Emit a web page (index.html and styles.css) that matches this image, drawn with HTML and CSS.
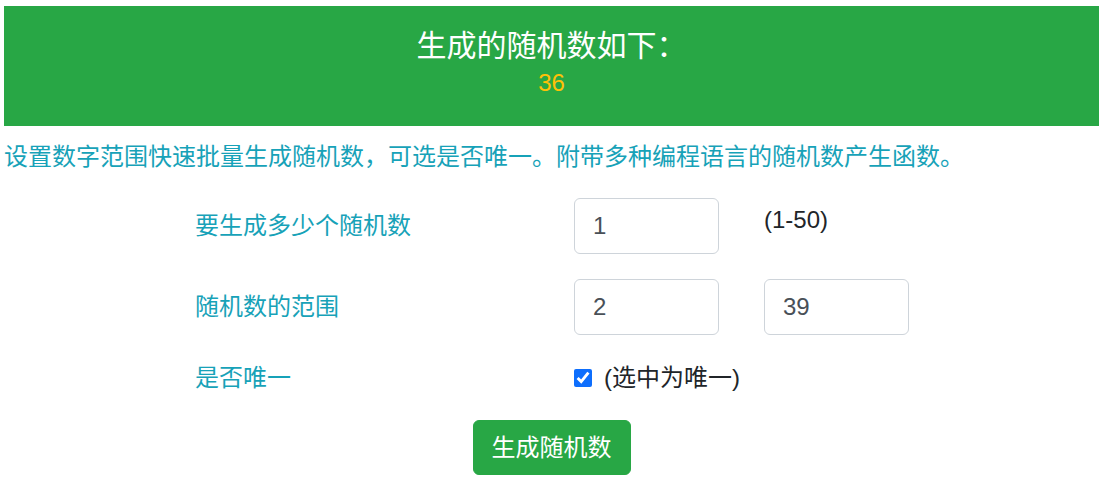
FILE: index.html
```html
<!DOCTYPE html>
<html lang="zh-CN">
<head>
<meta charset="utf-8">
<title>随机数生成器</title>
<link rel="stylesheet" href="styles.css">
</head>
<body>
<div class="result">
  <div class="result-title">生成的随机数如下：</div>
  <div class="result-value">36</div>
</div>
<p class="desc">设置数字范围快速批量生成随机数，可选是否唯一。附带多种编程语言的随机数产生函数。</p>
<form class="form">
  <label class="lbl">要生成多少个随机数</label>
  <div class="field"><input class="input" type="text" value="1"></div>
  <div class="hint">(1-50)</div>

  <label class="lbl">随机数的范围</label>
  <div class="field"><input class="input" type="text" value="2"></div>
  <div class="field"><input class="input" type="text" value="39"></div>

  <label class="lbl">是否唯一</label>
  <div class="check-wrap"><input class="check" type="checkbox" checked><span class="check-text">(选中为唯一)</span></div>
  <div></div>
</form>
<div class="actions"><button class="btn" type="button">生成随机数</button></div>
</body>
</html>
```

FILE: styles.css
```css
html, body {
  margin: 0;
  padding: 0;
  background: #fff;
}
body {
  padding: 6px 1px 0 4px;
  font-family: "Liberation Sans", "Noto Sans CJK SC", sans-serif;
  color: #212529;
}
.result {
  background: #28a745;
  height: 120px;
  box-sizing: border-box;
  padding-top: 20px;
  text-align: center;
}
.result-title {
  color: #fff;
  font-size: 30px;
  line-height: 40px;
}
.result-value {
  color: #ffc107;
  font-size: 24px;
  line-height: 34px;
}
.desc {
  margin: 13px 0 0 0;
  color: #17a2b8;
  font-size: 24px;
  line-height: 36px;
}
.form {
  display: grid;
  grid-template-columns: 379px 190px 145px;
  grid-template-rows: 56px 56px 36px;
  row-gap: 25px;
  margin: 23px 0 0 191px;
}
.lbl {
  color: #17a2b8;
  font-size: 24px;
  line-height: 36px;
  align-self: center;
}
.field {
  display: flex;
}
.input {
  box-sizing: border-box;
  width: 145px;
  height: 56px;
  padding: 9px 18px;
  border: 1px solid #ced4da;
  border-radius: 6px;
  font-family: "Liberation Sans", "Noto Sans CJK SC", sans-serif;
  font-size: 24px;
  color: #495057;
  background: #fff;
}
.hint {
  font-size: 24px;
  line-height: 36px;
  padding-top: 4px;
}
.check-wrap {
  display: flex;
  align-items: center;
  gap: 12px;
}
.check {
  width: 18px;
  height: 18px;
  margin: 0;
  accent-color: #0d6efd;
}
.check-text {
  font-size: 24px;
  line-height: 36px;
}
.actions {
  display: flex;
  justify-content: center;
  margin-top: 24px;
}
.btn {
  box-sizing: border-box;
  height: 55px;
  padding: 9px 18px;
  background: #28a745;
  border: 1px solid #28a745;
  border-radius: 6px;
  color: #fff;
  font-family: "Liberation Sans", "Noto Sans CJK SC", sans-serif;
  font-size: 24px;
  line-height: 36px;
}
```
